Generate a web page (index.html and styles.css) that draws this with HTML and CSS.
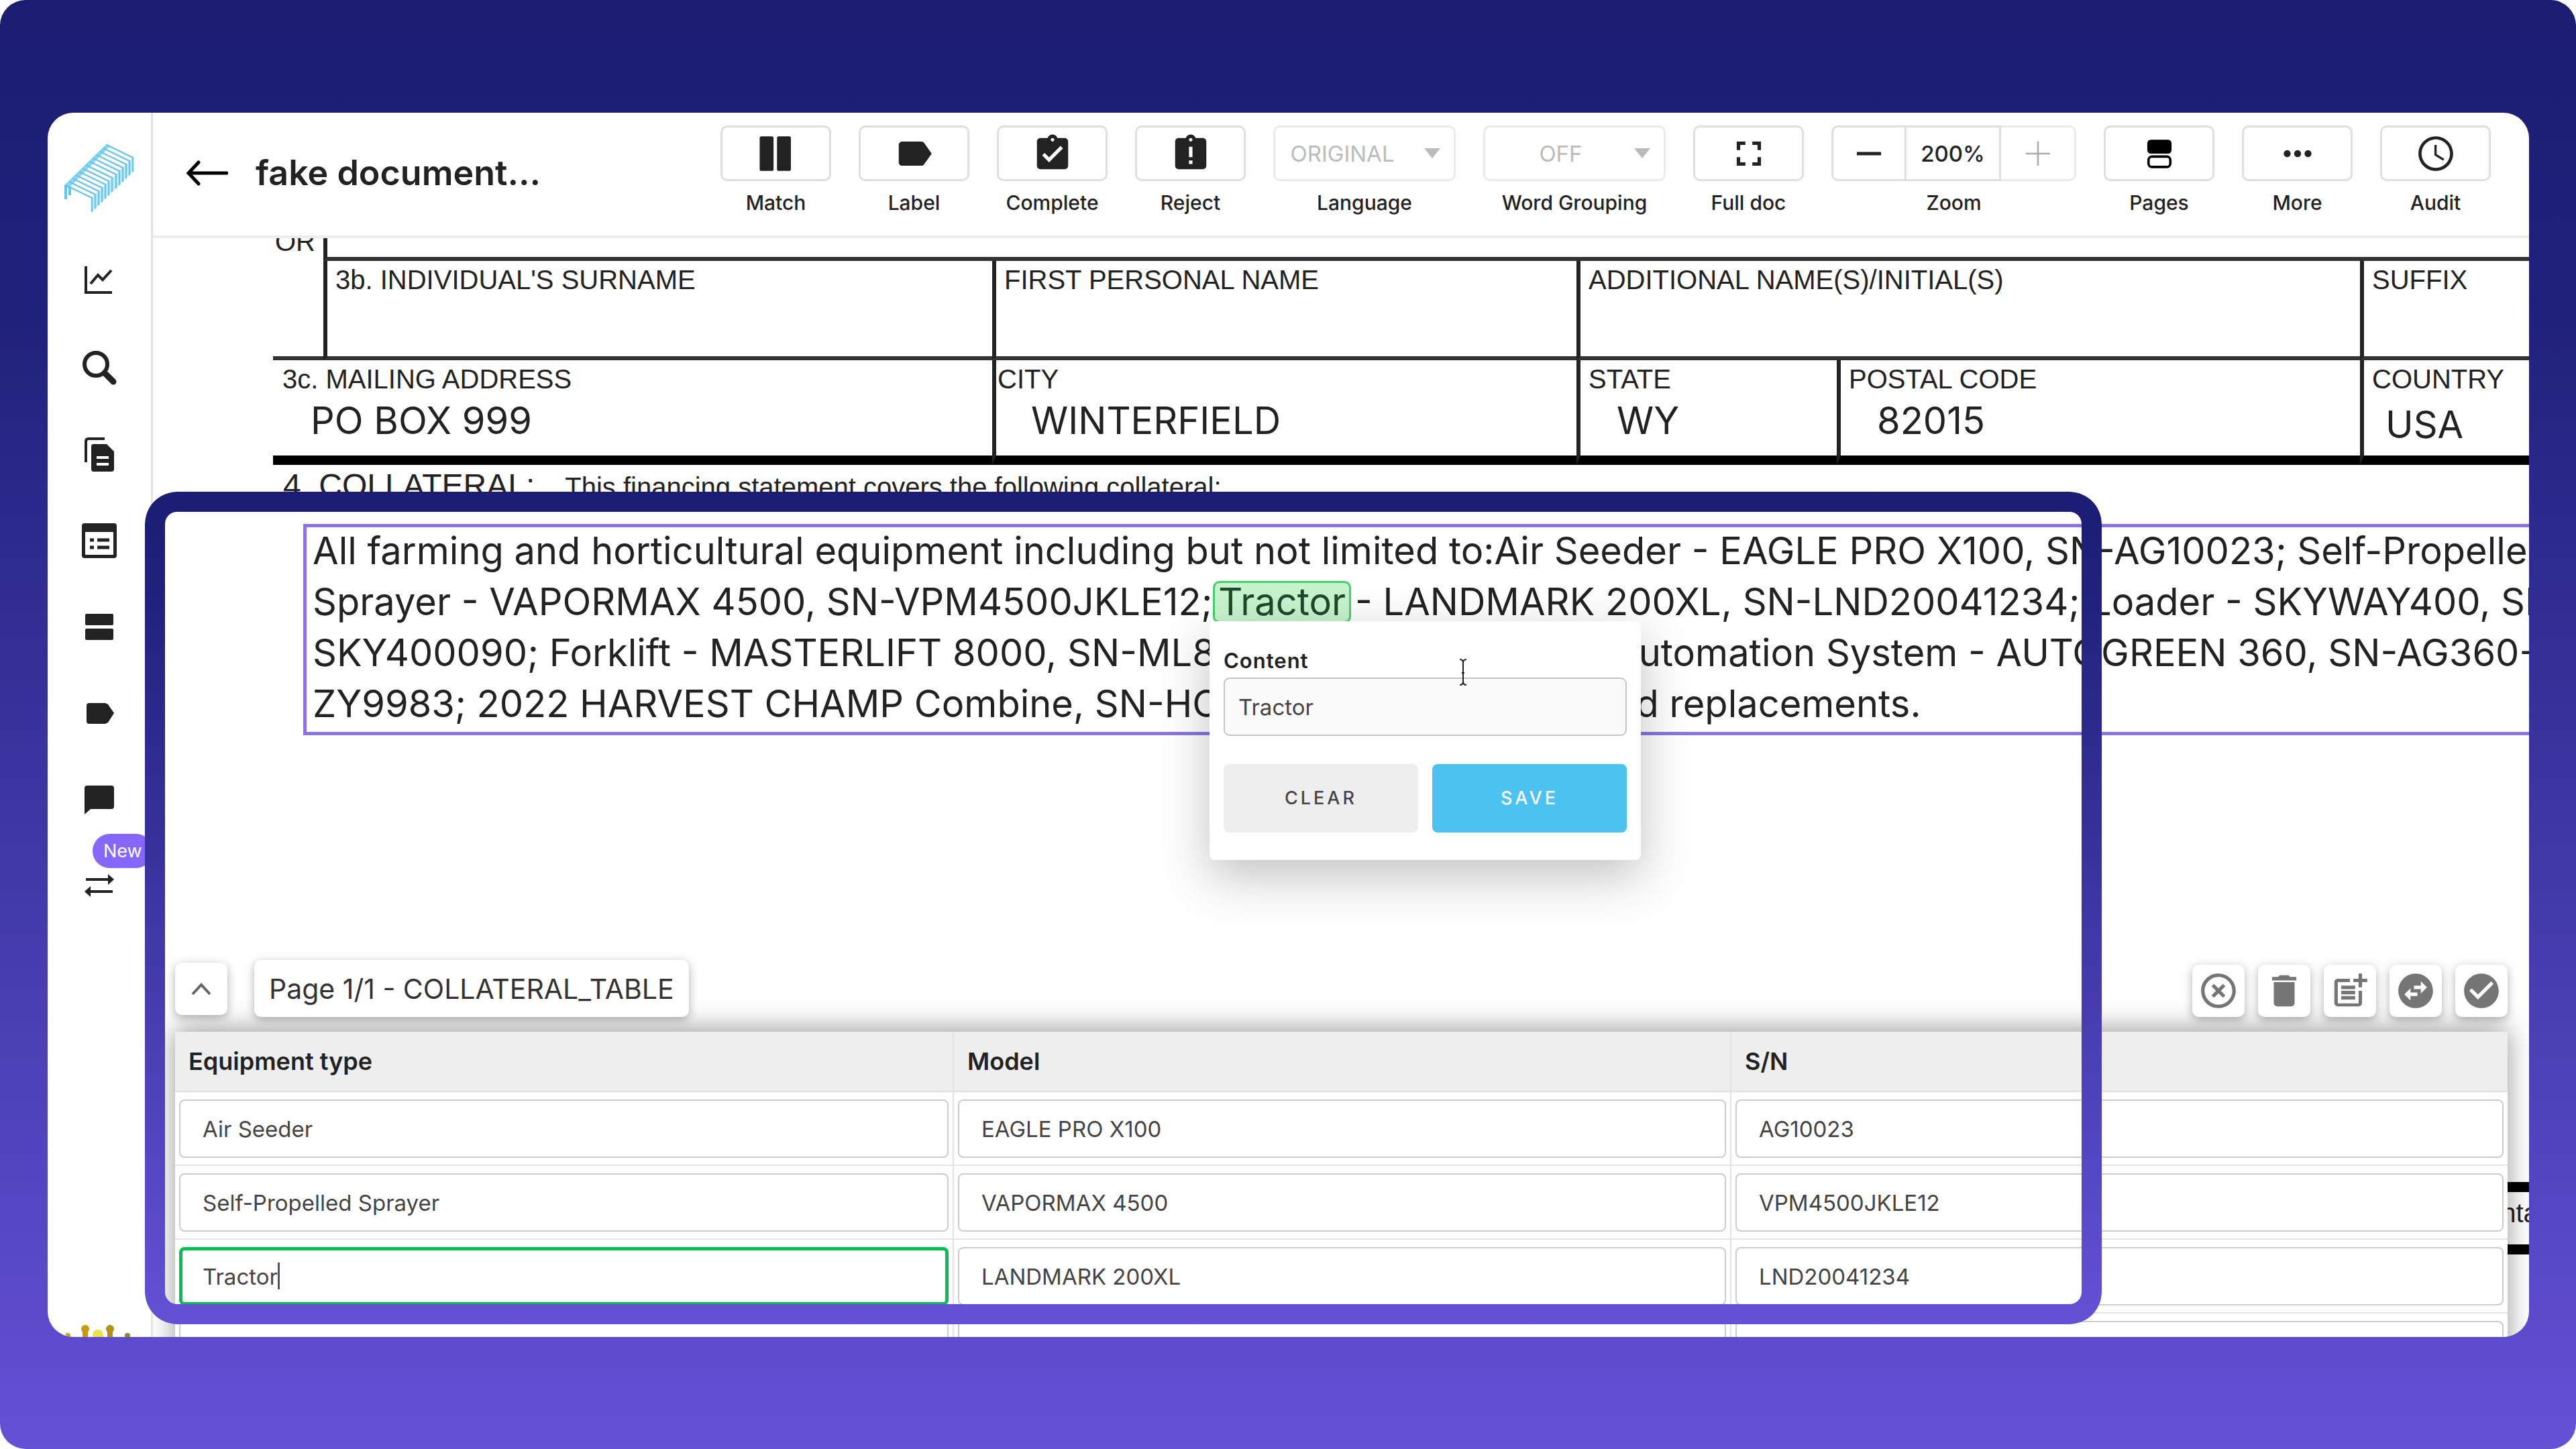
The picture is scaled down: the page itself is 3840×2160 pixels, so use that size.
FILE: index.html
```html
<!DOCTYPE html>
<html lang="en">
<head>
<meta charset="utf-8">
<title>fake document</title>
<link rel="stylesheet" href="styles.css">
</head>
<body>
<div class="stage">
<div class="app">

  <aside class="sidebar">
    <a class="logo" href="#" aria-label="Home">
      <svg width="106" height="106" viewBox="0 0 106 106" fill="none" stroke-width="2.500">
        <defs><path id="bar" d="M3 62l39 19v21"/></defs>
        <path d="M42 81l61-60v21l-61 60z" fill="#c4ecfa"/>
        <path d="M3 62L64 2l3 2L7 65z" fill="#8fdcf8" stroke="#7fd3f2"/>
        <g stroke="#6cc3e6">
          <use href="#bar" x="61" y="-60"/><use href="#bar" x="56" y="-55"/><use href="#bar" x="51" y="-50"/>
          <use href="#bar" x="46" y="-45"/><use href="#bar" x="41" y="-40"/><use href="#bar" x="36" y="-35"/>
          <use href="#bar" x="30" y="-30"/><use href="#bar" x="25" y="-25"/><use href="#bar" x="20" y="-20"/>
          <use href="#bar" x="15" y="-15"/><use href="#bar" x="10" y="-10"/><use href="#bar" x="5" y="-5"/>
          <use href="#bar"/>
        </g>
        <path d="M3 83V62M9 77V64" stroke="#5cc9f2" stroke-width="4"/>
      </svg>
    </a>
    <nav class="nav">
      <a href="#" aria-label="Analytics"><svg width="52" height="52" viewBox="0 0 52 52" fill="none" stroke="#222" stroke-width="4"><path d="M6 4v39h39"/><path d="M13 30l11-13 7 7 13-14"/></svg></a>
      <a href="#" aria-label="Search"><svg width="52" height="52" viewBox="0 0 52 52" fill="none" stroke="#222" stroke-width="6"><circle cx="21" cy="21" r="17"/><path d="M34 34l13 13" stroke-width="9" stroke-linecap="round"/></svg></a>
      <a href="#" aria-label="Documents"><svg width="52" height="52" viewBox="0 0 52 52"><path d="M6 38V7q0-4 4-4h24" fill="none" stroke="#222" stroke-width="4"/><path d="M17 11h20l11 11v26q0 4-4 4H17q-3 0-3-4V15q0-4 3-4z" fill="#222"/><path d="M22 31h18M22 41h18" stroke="#fff" stroke-width="4"/></svg></a>
      <a href="#" aria-label="Fields"><svg width="52" height="52" viewBox="0 0 52 52"><path d="M4 0h44q4 0 4 4v44q0 4-4 4H4q-4 0-4-4V4q0-4 4-4zm1 13v34h42V13z" fill="#222" fill-rule="evenodd"/><path d="M12 25h6M23 25h18M12 36h6M23 36h18" stroke="#222" stroke-width="5"/></svg></a>
      <a href="#" aria-label="Rows"><svg width="52" height="52" viewBox="0 0 52 52" fill="#222"><rect x="5" y="6" width="42" height="17" rx="2"/><rect x="5" y="28" width="42" height="17" rx="2"/></svg></a>
      <a href="#" aria-label="Labels"><svg width="52" height="52" viewBox="0 0 52 52" fill="#222"><path d="M11 10h24l4 2 9 13-9 14-4 2H11q-4 0-4-4V14q0-4 4-4z"/></svg></a>
      <a href="#" aria-label="Messages"><svg width="52" height="52" viewBox="0 0 52 52" fill="#222"><path d="M8 4h36q4 0 4 4v27q0 4-4 4H13l-9 8V8q0-4 4-4z"/></svg></a>
      <a href="#" aria-label="Transfer"><svg width="52" height="52" viewBox="0 0 52 52" fill="#222"><path d="M6 13h33V7l9 8-9 8v-6H6zM46 31H13v-6l-9 8 9 8v-6h33z"/></svg><span class="badge">New</span></a>
    </nav>
    <div class="crown">
      <svg width="100" height="20" viewBox="0 0 100 20"><circle cx="3" cy="18" r="4" fill="#c9a21a"/><circle cx="29" cy="8" r="6" fill="#c79a10"/><path d="M25 12h8v8h-8z" fill="#c79a10"/><circle cx="48" cy="17" r="8" fill="#ece24a"/><circle cx="66" cy="8" r="6" fill="#b3901c"/><path d="M62 12h8v8h-8z" fill="#b3901c"/><circle cx="92" cy="18" r="4" fill="#8f8a1c"/></svg>
    </div>
  </aside>

  <div class="main">
    <header class="topbar">
      <a class="back" href="#" aria-label="Back"><svg width="64" height="54" viewBox="0 0 64 54" fill="none" stroke="#000" stroke-width="5"><path d="M62 27H5M20 11L5 27l15 16" stroke-linecap="round"/></svg></a>
      <h1>fake document...</h1>
      <div class="tools">
        <div class="tool"><button aria-label="Match"><svg class="ic" viewBox="0 0 24 24"><path d="M3.500 2h6q1 0 1 1v18q0 1-1 1h-6q-1 0-1-1V3q0-1 1-1zM13.500 2h6q1 0 1 1v18q0 1-1 1h-6q-1 0-1-1V3q0-1 1-1z"/></svg></button><span>Match</span></div>
        <div class="tool"><button aria-label="Label"><svg class="ic" viewBox="0 0 24 24"><path d="M17.630 5.840C17.270 5.330 16.670 5 16 5L5 5.010C3.900 5.010 3 5.900 3 7v10c0 1.100.9 1.990 2 1.990L16 19c.67 0 1.270-.33 1.630-.84L22 12l-4.370-6.160z"/></svg></button><span>Label</span></div>
        <div class="tool"><button aria-label="Complete"><svg class="ic" viewBox="0 0 24 24"><path d="M19 3h-4.180C14.400 1.840 13.300 1 12 1c-1.300 0-2.400.84-2.820 2H5c-1.100 0-2 .9-2 2v14c0 1.100.9 2 2 2h14c1.100 0 2-.9 2-2V5c0-1.100-.9-2-2-2zm-7 0c.55 0 1 .45 1 1s-.45 1-1 1-1-.45-1-1 .45-1 1-1zm-2 14l-4-4 1.410-1.410L10 14.170l6.590-6.590L18 9l-8 8z"/></svg></button><span>Complete</span></div>
        <div class="tool"><button aria-label="Reject"><svg class="ic" viewBox="0 0 24 24"><path d="M19 3h-4.180C14.400 1.840 13.300 1 12 1c-1.300 0-2.400.84-2.820 2H5c-1.100 0-2 .9-2 2v14c0 1.100.9 2 2 2h14c1.100 0 2-.9 2-2V5c0-1.100-.9-2-2-2zm-6 15h-2v-2h2v2zm0-4h-2V8h2v6zm-1-9c-.55 0-1-.45-1-1s.45-1 1-1 1 .45 1 1-.45 1-1 1z"/></svg></button><span>Reject</span></div>
        <div class="tool wide">
          <div class="pick"><select id="lang" disabled><option>ORIGINAL</option></select><svg width="24" height="15" viewBox="0 0 24 15"><path d="M0 0h24L12 15z" fill="#bbb"/></svg></div>
          <label for="lang">Language</label>
        </div>
        <div class="tool wide">
          <div class="pick short"><select id="group" disabled><option>OFF</option></select><svg width="24" height="15" viewBox="0 0 24 15"><path d="M0 0h24L12 15z" fill="#bbb"/></svg></div>
          <label for="group">Word Grouping</label>
        </div>
        <div class="tool"><button aria-label="Full doc"><svg class="ic" viewBox="0 0 24 24"><path d="M7 14H5v5h5v-2H7v-3zm-2-4h2V7h3V5H5v5zm12 7h-3v2h5v-5h-2v3zM14 5v2h3v3h2V5h-5z"/></svg></button><span>Full doc</span></div>
        <div class="tool zoom">
          <div class="stepper"><button aria-label="Zoom out"><svg class="ic" viewBox="0 0 24 24"><path d="M5 11h14v2H5z"/></svg></button><button class="value">200%</button><button class="off" disabled aria-label="Zoom in"><svg class="ic" viewBox="0 0 24 24"><path d="M19 12.500h-6.500V19h-1v-6.500H5v-1h6.500V5h1v6.500H19z"/></svg></button></div>
          <span>Zoom</span>
        </div>
        <div class="tool"><button aria-label="Pages"><svg class="ic" viewBox="0 0 24 24"><rect x="5" y="4" width="14" height="8" rx="2" fill="#000"/><rect x="5.700" y="13.700" width="12.600" height="6" rx="2" fill="none" stroke="#000" stroke-width="1.400"/></svg></button><span>Pages</span></div>
        <div class="tool"><button aria-label="More"><svg class="ic" viewBox="0 0 24 24"><circle cx="6" cy="12" r="2"/><circle cx="12" cy="12" r="2"/><circle cx="18" cy="12" r="2"/></svg></button><span>More</span></div>
        <div class="tool"><button aria-label="Audit"><svg class="ic" viewBox="0 0 24 24"><path d="M12 2C6.480 2 2 6.480 2 12s4.480 10 10 10 10-4.480 10-10S17.520 2 12 2zm0 18.200c-4.500 0-8.200-3.700-8.200-8.200S7.500 3.800 12 3.800s8.200 3.700 8.200 8.200-3.700 8.200-8.200 8.200zM12.500 7H11.200v6l5 3.100.7-1.100-4.400-2.700z"/></svg></button><span>Audit</span></div>
      </div>
    </header>

    <div class="viewer">
      <div class="form">
        <div class="cell or"><p class="cap">OR</p></div>
        <div class="cell stub"></div>
        <div class="cell c1"><p class="cap">3b. INDIVIDUAL'S SURNAME</p></div>
        <div class="cell c2"><p class="cap">FIRST PERSONAL NAME</p></div>
        <div class="cell c3"><p class="cap">ADDITIONAL NAME(S)/INITIAL(S)</p></div>
        <div class="cell c5"><p class="cap">SUFFIX</p></div>
        <div class="cell low addr"><p class="cap">3c. MAILING ADDRESS</p><p class="val">PO BOX 999</p></div>
        <div class="cell low city"><p class="cap">CITY</p><p class="val">WINTERFIELD</p></div>
        <div class="cell low"><p class="cap">STATE</p><p class="val">WY</p></div>
        <div class="cell low"><p class="cap">POSTAL CODE</p><p class="val">82015</p></div>
        <div class="cell low country"><p class="cap">COUNTRY</p><p class="val">USA</p></div>
      </div>
      <div class="section"><span class="sec-title">4. COLLATERAL:</span><span class="cap">This financing statement covers the following collateral:</span></div>
      <div class="collateral">
        <p>All farming and horticultural equipment including but not limited to:Air Seeder - EAGLE PRO X100, SN-AG10023; Self-Propelled</p>
        <p>Sprayer - VAPORMAX 4500, SN-VPM4500JKLE12; <span class="mark">Tractor</span> - LANDMARK 200XL, SN-LND20041234; Loader - SKYWAY400, SN-</p>
        <p class="split"><span class="lead">SKY400090; Forklift - MASTERLIFT 8000, SN-ML8</span><span>Automation System - AUTOGREEN 360, SN-AG360-</span></p>
        <p class="split"><span class="lead last">ZY9983; 2022 HARVEST CHAMP Combine, SN-HC</span><span>and replacements.</span></p>
        <form class="popover">
          <label for="content">Content</label>
          <input id="content" type="text" value="Tractor">
          <div class="actions"><button type="button" class="clear">CLEAR</button><button type="button" class="save">SAVE</button></div>
          <svg class="ibeam" width="14" height="40" viewBox="0 0 14 40" fill="none" stroke="#222" stroke-width="2"><path d="M2 1q5 0 5 5 0-5 5-5M7 6v28M2 39q5 0 5-5 0 5 5 5M5 21h4"/></svg>
        </form>
      </div>
      <div class="footnote"><p class="cap">Contact</p></div>

      <section class="panel">
        <div class="panel-bar">
          <button class="chip collapse" aria-label="Collapse"><svg width="34" height="24" viewBox="0 0 34 24" fill="none" stroke="#666" stroke-width="4"><path d="M4 20L17 6l13 14"/></svg></button>
          <div class="chip page">Page 1/1 - COLLATERAL_TABLE</div>
          <div class="row-actions">
            <button class="chip" aria-label="Cancel"><svg class="ic" viewBox="0 0 24 24"><path d="M12 2C6.470 2 2 6.470 2 12s4.470 10 10 10 10-4.470 10-10S17.530 2 12 2zm0 18c-4.410 0-8-3.590-8-8s3.590-8 8-8 8 3.590 8 8-3.590 8-8 8zm2.590-12L12 10.590 9.410 8 8 9.410 10.590 12 8 14.590 9.410 16 12 13.410 14.590 16 16 14.590 13.410 12 16 9.410z"/></svg></button>
            <button class="chip" aria-label="Delete"><svg class="ic" viewBox="0 0 24 24"><path d="M6 19c0 1.100.9 2 2 2h8c1.100 0 2-.9 2-2V7H6v12zM19 4h-3.500l-1-1h-5l-1 1H5v2h14V4z"/></svg></button>
            <button class="chip" aria-label="Add row"><svg class="ic" viewBox="0 0 24 24"><path d="M17 19.220H5V7h7V5H5c-1.100 0-2 .9-2 2v12c0 1.100.9 2 2 2h12c1.100 0 2-.9 2-2v-7h-2v7.220zM19 2h-2v3h-3v2h3v2.990h2V7h3V5h-3V2zM7 9h8v2H7zM7 12h8v2H7zM7 15h8v2H7z"/></svg></button>
            <button class="chip" aria-label="Swap"><svg class="ic" viewBox="0 0 24 24"><path d="M22 12c0-5.520-4.480-10-10-10S2 6.480 2 12s4.480 10 10 10 10-4.480 10-10zm-7-5.500l3.500 3.500-3.500 3.500V11h-4V9h4V6.500zm-6 11L5.500 14 9 10.500V13h4v2H9v2.500z"/></svg></button>
            <button class="chip" aria-label="Confirm"><svg class="ic" viewBox="0 0 24 24"><path d="M12 2C6.480 2 2 6.480 2 12s4.480 10 10 10 10-4.480 10-10S17.520 2 12 2zm-2 15l-5-5 1.410-1.410L10 14.170l7.590-7.590L19 8l-9 9z"/></svg></button>
          </div>
        </div>
        <table>
          <thead><tr><th scope="col">Equipment type</th><th scope="col">Model</th><th scope="col">S/N</th></tr></thead>
          <tbody>
            <tr><td><input aria-label="Equipment type" value="Air Seeder"></td><td><input aria-label="Model" value="EAGLE PRO X100"></td><td><input aria-label="S/N" value="AG10023"></td></tr>
            <tr><td><input aria-label="Equipment type" value="Self-Propelled Sprayer"></td><td><input aria-label="Model" value="VAPORMAX 4500"></td><td><input aria-label="S/N" value="VPM4500JKLE12"></td></tr>
            <tr><td class="active"><input aria-label="Equipment type" value="Tractor"><i class="caret"></i></td><td><input aria-label="Model" value="LANDMARK 200XL"></td><td><input aria-label="S/N" value="LND20041234"></td></tr>
            <tr><td><input aria-label="Equipment type"></td><td><input aria-label="Model"></td><td><input aria-label="S/N"></td></tr>
          </tbody>
        </table>
      </section>
    </div>
  </div>
  <div class="focus-frame"></div>
</div>
</div>
</body>
</html>
```

FILE: styles.css
```css
* { box-sizing: border-box; }
html { background: #fff; }
body { margin: 0; font-family: Inter, "Liberation Sans", sans-serif; color: #222; }
p, h1 { margin: 0; }
button, input, select { font: inherit; color: inherit; margin: 0; }
svg { display: block; flex: none; }

.stage {
  display: flex;
  height: 100vh;
  padding: 168px 70px 167px 71px;
  border-radius: 38px;
  background: linear-gradient(#1b1c72, #20217c 22%, #6351d6);
}
.app {
  position: relative;
  flex: 1;
  min-width: 0;
  display: flex;
  overflow: hidden;
  border-radius: 38px;
  background: #fefefe;
}

/* sidebar */
.sidebar {
  flex: none;
  width: 157px;
  display: flex;
  flex-direction: column;
  align-items: center;
  padding-top: 46px;
  border-right: 3px solid #e4e4e4;
}
.nav { display: flex; flex-direction: column; gap: 77px; margin-top: 73px; }
.nav a { position: relative; display: block; }
.badge {
  position: absolute;
  left: 16px;
  top: -53px;
  padding: 0 16px;
  border-radius: 26px;
  background: #8567fb;
  color: #fff;
  font-size: 27px;
  line-height: 51px;
}
.crown { margin-top: auto; }

.main { flex: 1; min-width: 0; display: flex; flex-direction: column; }

/* top bar */
.topbar {
  flex: none;
  display: flex;
  align-items: center;
  height: 187px;
  padding: 0 57px 4px 48px;
  border-bottom: 4px solid #ececec;
}
.topbar h1 { margin-left: 41px; font-size: 52px; font-weight: 600; line-height: 60px; white-space: nowrap; }
.tools { display: flex; gap: 41px; align-self: flex-start; margin-left: auto; padding-top: 19px; }
.tool {
  display: flex;
  flex-direction: column;
  align-items: stretch;
  gap: 13px;
  width: 165px;
  font-size: 30px;
  font-weight: 500;
  line-height: 38px;
  text-align: center;
  white-space: nowrap;
}
.tool.wide { width: 272px; }
.tool.zoom { width: 365px; }
.tool button {
  display: flex;
  align-items: center;
  justify-content: center;
  height: 83px;
  padding: 0;
  border: 3px solid #dfdfdf;
  border-radius: 10px;
  background: transparent;
}
.ic { width: 62px; height: 62px; fill: #222; }
.pick { display: grid; align-items: center; }
.pick > * { grid-area: 1 / 1; }
.pick svg { justify-self: end; margin-right: 23px; }
.pick select {
  appearance: none;
  width: 100%;
  height: 83px;
  padding: 0 66px 0 0;
  border: 3px solid #ebebeb;
  border-radius: 10px;
  background: transparent;
  color: #bbb;
  opacity: 1;
  font-size: 33px;
  font-weight: 400;
  text-align: center;
  text-align-last: center;
}
.pick.short select { padding-right: 41px; }
.stepper { display: grid; grid-template-columns: 112px 1fr 112px; }
.stepper button:first-child { border-radius: 10px 0 0 10px; }
.stepper .value { border-left: 0; border-radius: 0; font-size: 33px; font-weight: 500; }
.stepper .off { border-left: 0; border-color: #ebebeb; border-radius: 0 10px 10px 0; }
.stepper .off .ic { fill: #aaa; }

/* document page */
.viewer { position: relative; flex: 1; min-height: 0; overflow: hidden; }
.form {
  display: grid;
  grid-template-columns: 75fr 997fr 871fr 388fr 780fr 252fr;
  grid-template-rows: 34px 148px 156px;
  margin-left: 179px;
}
.cell { border-left: 6px solid #222; border-bottom: 6px solid #333; min-width: 0; padding: 4px 0 0 12px; }
.cap { font-family: "Liberation Sans", sans-serif; font-size: 40px; line-height: 48px; color: #222; white-space: nowrap; }
.or { grid-row: 1 / 3; border-left: 0; padding: 0; }
.or .cap { margin-top: -19px; margin-left: 3px; }
.stub { grid-column: 2 / 7; }
.c3 { grid-column: 4 / 6; }
.low { border-bottom: 14px solid #000; }
.addr { grid-column: 1 / 3; border-left: 0; padding-left: 14px; }
.city { padding-left: 2px; }
.city .val { padding-left: 50px; }
.val { padding: 4px 0 0 42px; font-size: 56px; line-height: 68px; white-space: nowrap; }
.country .val { padding: 10px 0 0 20px; }
.section { display: flex; align-items: baseline; gap: 45px; margin: 7px 0 0 194px; white-space: nowrap; height: 48px; }
.sec-title { font-family: "Liberation Sans", sans-serif; font-size: 48px; line-height: 48px; }
.collateral {
  position: relative;
  margin: 33px -12px 0 224px;
  padding: 2px 0 9px 14px;
  outline: 5px solid #8b74e0;
  outline-offset: -5px;
  font-size: 56px;
  line-height: 76px;
  white-space: nowrap;
}
.mark {
  display: inline-block;
  margin: 0 -10px 0 -15px;
  padding: 0 8px;
  border-radius: 10px;
  box-shadow: inset 0 0 0 3px #45cf6d;
  background: #c6f2cc;
  color: #1d4a2a;
  line-height: 63px;
}
.split { display: flex; }
.lead { flex: none; width: 1938px; overflow: hidden; }
.lead.last { width: 1908px; }

.popover {
  position: absolute;
  left: 1351px;
  top: 145px;
  width: 643px;
  padding: 41px 21px;
  display: flex;
  flex-direction: column;
  border-radius: 8px;
  background: #fff;
  box-shadow: 0 24px 70px rgba(0, 0, 0, .24);
}
.popover label { margin-bottom: 7px; font-size: 31px; font-weight: 600; line-height: 36px; letter-spacing: 1px; }
.popover input {
  height: 87px;
  padding: 0 20px;
  border: 2px solid #c4c4c4;
  border-radius: 9px;
  background: #fafafa;
  color: #444;
  font-size: 33px;
}
.popover .actions { display: grid; grid-template-columns: 1fr 1fr; gap: 21px; margin-top: 42px; }
.popover button { height: 102px; border: 0; border-radius: 8px; font-size: 27px; font-weight: 500; letter-spacing: 4px; }
.popover .clear { background: #eee; color: #444; }
.popover .save { background: #4cc2f1; color: #fff; }
.ibeam { position: absolute; left: 371px; top: 56px; }

.footnote {
  width: 100px;
  height: 108px;
  margin: 666px 12px 0 auto;
  margin-right: 0;
  border: solid #000;
  border-width: 15px 0;
  padding: 7px 0 0 7px;
}

/* table panel */
.panel { position: absolute; left: 33px; right: 32px; top: 1076px; }
.panel-bar { position: relative; z-index: 1; display: flex; align-items: center; padding-bottom: 22px; }
.chip {
  display: flex;
  align-items: center;
  justify-content: center;
  width: 78px;
  height: 78px;
  padding: 0;
  border: 0;
  border-radius: 10px;
  background: #fff;
  box-shadow: 0 4px 14px rgba(0, 0, 0, .3);
}
.chip .ic { fill: #757575; }
.chip.page { width: auto; height: 85px; margin-left: 40px; padding: 0 22px; font-size: 41px; color: #333; white-space: nowrap; }
.row-actions { display: flex; gap: 20px; align-self: flex-end; margin-left: auto; }
table {
  width: 100%;
  table-layout: fixed;
  border-collapse: separate;
  border-spacing: 0;
  background: #fefefe;
  box-shadow: 0 -4px 36px rgba(0, 0, 0, .4);
}
th {
  height: 90px;
  padding: 0 20px;
  border-bottom: 2px solid #e2e2e2;
  background: #eee;
  font-size: 36px;
  font-weight: 600;
  text-align: left;
}
td { position: relative; padding: 11px 6px 10px; border-bottom: 2px solid #e4e4e4; }
th + th, td + td { border-left: 2px solid #e2e2e2; }
td input {
  display: block;
  width: 100%;
  height: 87px;
  padding: 0 33px;
  border: 2px solid #ccc;
  border-radius: 8px;
  background: #fff;
  color: #444;
  font-size: 33px;
}
.active input { border: 5px solid #06bf53; padding: 0 30px; }
.caret { position: absolute; left: 153px; top: 34px; width: 3px; height: 40px; background: #555; }

/* highlight frame around the working area */
.focus-frame {
  position: absolute;
  left: 145px;
  right: 637px;
  top: 565px;
  bottom: 19px;
  padding: 30px;
  border-radius: 48px;
  background: linear-gradient(#1b1c72, #20217c 12%, #6351d6);
  mask: linear-gradient(#000 0 0), conic-gradient(#000 0 0) content-box;
  mask-composite: exclude;
  pointer-events: none;
}
```
